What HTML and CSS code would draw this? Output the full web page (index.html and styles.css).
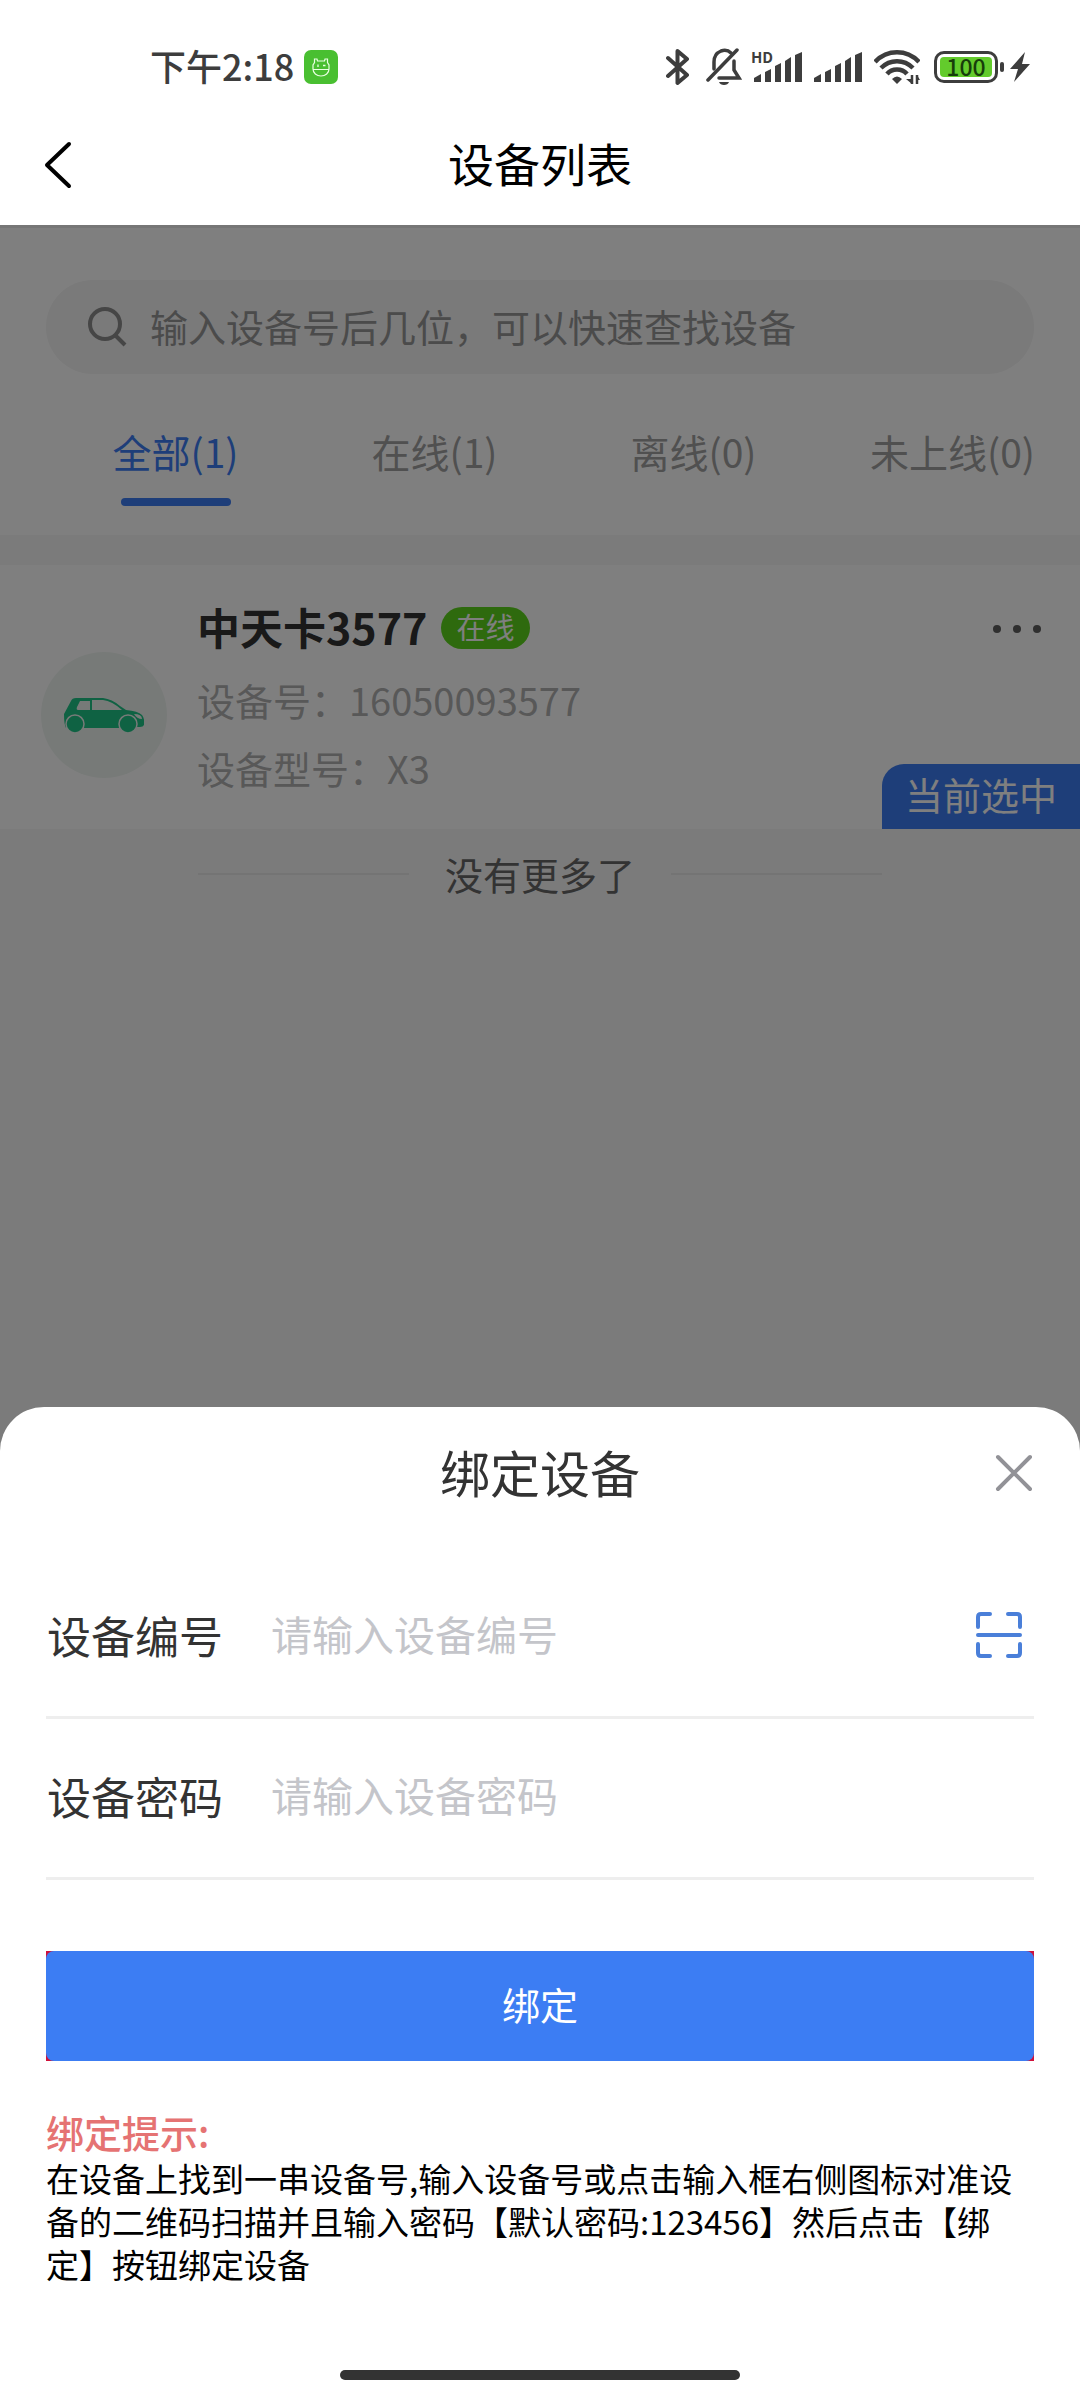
FILE: index.html
```html
<!DOCTYPE html>
<html lang="zh-CN">
<head>
    <meta charset="UTF-8">
    <meta name="viewport" content="width=device-width, initial-scale=1.0">
    <title>设备列表</title>
    <link rel="stylesheet" href="styles.css">
</head>
<body>
    <div class="status-bar">
        <div class="status-left">
            <span class="time">下午2:18</span>
            <svg class="app-icon" width="34" height="34" viewBox="0 0 34 34">
                <rect width="34" height="34" rx="7" fill="#49bf31"/>
                <path d="M9 19 V15 L10.500 12.500 V9 H13 L13.500 11 H20.500 L21 9 H23.500 V12.500 L25 15 V19 C25 23 21.500 26 17 26 S9 23 9 19 Z M9 19.500 H25" fill="none" stroke="#e9ffe2" stroke-width="1.2"/>
                <path d="M14 14.500 V17 M19 15.500 H21.500" stroke="#e9ffe2" stroke-width="1.3"/>
            </svg>
        </div>
        <div class="status-right">
            <svg width="24" height="38" viewBox="0 0 24 38" fill="none" stroke="#3d3d3d" stroke-width="4" stroke-linejoin="round" stroke-linecap="round">
                <path d="M2 10 L21 27 L11.500 35 V3 L21 11 L2 28"/>
            </svg>
            <svg class="bell" width="36" height="38" viewBox="0 0 36 38" fill="none" stroke="#3d3d3d" stroke-width="3.5" stroke-linecap="round">
                <path d="M25 5 C22 2 18 2 15 3 C10 5 8 9 8 14 V21 M28 13 V22 L33 30 H13"/>
                <path d="M2 32 L31 2"/>
                <path d="M13 34 H23 C22 38 14 38 13 34 Z" fill="#3d3d3d" stroke="none"/>
            </svg>
            <div class="signal-hd">
                <span class="hd">HD</span>
                <svg width="48" height="30" viewBox="0 0 48 30" fill="#3d3d3d">
                    <path d="M0 30 V26 L7 22 V30 Z M11 30 V20 L17 17 V30 Z M21 30 V14 L27 11 V30 Z M31 30 V9 L37 5 V30 Z M41 30 V3 L48 0 V30 Z"/>
                </svg>
            </div>
            <svg width="48" height="30" viewBox="0 0 48 30" fill="#3d3d3d">
                <path d="M0 30 V26 L7 22 V30 Z M11 30 V20 L17 17 V30 Z M21 30 V14 L27 11 V30 Z M31 30 V9 L37 5 V30 Z M41 30 V3 L48 0 V30 Z"/>
            </svg>
            <svg width="46" height="36" viewBox="0 0 46 36" fill="none" stroke="#3d3d3d" stroke-width="4.5">
                <path d="M1 13 C13 0 33 0 45 13 M7 19 C16 10 30 10 39 19 M13 25 C18 19 28 19 33 25"/>
                <path d="M18 30 Q23 25 28 30 L23 35 Z" fill="#3d3d3d" stroke="none"/>
                <path d="M38 26 V35 M43 35 V26" stroke-width="2.5"/>
                <path d="M32 30 H38 V35 Z M43 26 V31 H46 Z" fill="#3d3d3d" stroke="none"/>
            </svg>
            <div class="battery">
                <span class="battery-level">100</span>
            </div>
            <svg width="20" height="30" viewBox="0 0 20 30" fill="#3d3d3d">
                <path d="M15 0 L0 17 H8 L4 30 L20 12 H12 Z"/>
            </svg>
        </div>
    </div>

    <div class="navbar">
        <a href="#" class="back" aria-label="返回">
            <svg width="30" height="50" viewBox="0 0 30 50" fill="none" stroke="#000" stroke-width="4" stroke-linecap="round" stroke-linejoin="round">
                <path d="M26 4 L4 25 L26 46"/>
            </svg>
        </a>
        <h1>设备列表</h1>
    </div>

    <div class="page">
        <div class="top-panel">
            <div class="search">
                <svg width="42" height="42" viewBox="0 0 42 42" fill="none" stroke="#8c8c8c" stroke-width="4">
                    <circle cx="19" cy="18" r="15"/>
                    <path d="M29 29 L39 39"/>
                </svg>
                <input type="text" id="keyword" aria-label="查找设备" placeholder="输入设备号后几位，可以快速查找设备">
            </div>
            <div class="tabs">
                <button class="tab active">全部(1)</button>
                <button class="tab">在线(1)</button>
                <button class="tab">离线(0)</button>
                <button class="tab">未上线(0)</button>
            </div>
        </div>

        <div class="device">
            <div class="avatar">
                <svg width="80" height="35" viewBox="0 0 80 35">
                    <path d="M0 16 L7 3 Q8 0 12 0 H39 Q48 1 56 8 L62 12 Q74 13 78 17 Q81 21 80 27 Q79 29 76 29 H73 L64 30 H2 Q0 26 0 16 Z" fill="#1fc487"/>
                    <path d="M16 3 H26 V12 H14 Q12 12 13 9 Z M28 2 H39 Q48 3 58 12 H28 Z M70 16 Q78 16 78 21 Q73 21 70 16 Z" fill="#eff5f1"/>
                    <circle cx="11" cy="26" r="9" fill="#1fc487" stroke="#eff5f1" stroke-width="1.5"/>
                    <circle cx="64" cy="26" r="9" fill="#1fc487" stroke="#eff5f1" stroke-width="1.5"/>
                </svg>
            </div>
            <div class="info">
                <div class="name-row">
                    <h2>中天卡3577</h2>
                    <span class="badge">在线</span>
                </div>
                <p>设备号：16050093577</p>
                <p>设备型号：X3</p>
            </div>
            <button class="more" aria-label="更多">
                <svg width="50" height="10" viewBox="0 0 50 10" fill="#5e5e5e">
                    <circle cx="5" cy="5" r="4"/>
                    <circle cx="25" cy="5" r="4"/>
                    <circle cx="45" cy="5" r="4"/>
                </svg>
            </button>
            <span class="current">当前选中</span>
        </div>
        <div class="no-more">没有更多了</div>

        <!-- 绑定设备弹窗 -->
        <div class="mask">
            <div class="sheet">
                <div class="sheet-header">
                    <h2>绑定设备</h2>
                    <button class="close" aria-label="关闭">
                        <svg width="40" height="40" viewBox="0 0 40 40" stroke="#929297" stroke-width="4" stroke-linecap="round">
                            <path d="M4 4 L36 36 M36 4 L4 36"/>
                        </svg>
                    </button>
                </div>
                <div class="field">
                    <label for="deviceNo">设备编号</label>
                    <input type="text" id="deviceNo" placeholder="请输入设备编号">
                    <button class="scan" aria-label="扫码">
                        <svg width="46" height="46" viewBox="0 0 46 46" fill="none" stroke="#4a7fd9" stroke-width="4" stroke-linecap="round" stroke-linejoin="round">
                            <path d="M2 15 V5 Q2 2 5 2 H14 M32 2 H41 Q44 2 44 5 V15 M2 32 V41 Q2 44 5 44 H14 M32 44 H41 Q44 44 44 41 V32 M2 23 H44"/>
                        </svg>
                    </button>
                </div>
                <div class="field">
                    <label for="devicePwd">设备密码</label>
                    <input type="password" id="devicePwd" placeholder="请输入设备密码">
                </div>
                <div class="submit-wrap">
                    <button class="submit">绑定</button>
                </div>
                <h3>绑定提示:</h3>
                <p class="tips">在设备上找到一串设备号,输入设备号或点击输入框右侧图标对准设备的二维码扫描并且输入密码【默认密码:123456】然后点击【绑定】按钮绑定设备</p>
                <div class="home-bar"></div>
            </div>
        </div>
    </div>
</body>
</html>
```

FILE: styles.css
```css
* {
    margin: 0;
    padding: 0;
    box-sizing: border-box;
}
body {
    font-family: "Noto Sans CJK SC", "Noto Sans", sans-serif;
    display: flex;
    flex-direction: column;
    min-height: 100vh;
    background-color: #fff;
}
svg {
    display: block;
    flex-shrink: 0;
}
button {
    font-family: inherit;
    border: none;
    background: none;
    cursor: pointer;
}
input {
    font-family: inherit;
    border: none;
    outline: none;
    background: none;
    flex: 1;
    min-width: 0;
}

/* 状态栏 */
.status-bar {
    display: flex;
    justify-content: space-between;
    align-items: center;
    height: 104px;
    padding: 30px 50px 0 150px;
}
.status-left {
    display: flex;
    align-items: center;
    gap: 10px;
}
.time {
    padding-bottom: 4px;
    font-size: 36px;
    font-weight: 500;
    line-height: 40px;
    color: #3d3d3d;
}
.status-right {
    display: flex;
    align-items: center;
    gap: 12px;
}
.bell {
    margin-left: 4px;
}
.signal-hd {
    position: relative;
}
.hd {
    position: absolute;
    top: -3px;
    left: -3px;
    font-size: 15px;
    font-weight: 700;
    line-height: 16px;
    color: #3d3d3d;
}
.battery {
    position: relative;
    width: 64px;
    height: 32px;
    padding: 3px;
    margin-left: 2px;
    border: 3px solid #3d3d3d;
    border-radius: 10px;
}
.battery::after {
    content: "";
    position: absolute;
    top: 8px;
    right: -9px;
    width: 4px;
    height: 10px;
    border-radius: 2px;
    background-color: #3d3d3d;
}
.battery-level {
    display: block;
    height: 20px;
    border-radius: 4px;
    background-color: #63cb2c;
    color: #173d0b;
    font-size: 23px;
    font-weight: 500;
    line-height: 18px;
    text-align: center;
}

/* 导航栏 */
.navbar {
    display: flex;
    align-items: center;
    height: 121px;
    padding: 0 43px;
}
.navbar h1 {
    flex: 1;
    margin-right: 30px;
    padding-bottom: 6px;
    font-size: 46px;
    font-weight: 400;
    line-height: 60px;
    text-align: center;
    color: #000;
}

.page {
    position: relative;
    flex: 1;
    background-color: #f6f6f6;
}
.top-panel {
    padding: 52px 46px 29px;
    border-top: 3px solid #ececec;
    background-color: #fff;
}
.search {
    display: flex;
    align-items: center;
    gap: 22px;
    height: 94px;
    padding: 0 40px;
    border-radius: 47px;
    background-color: #f4f4f4;
}
.search input {
    height: 60px;
    padding-bottom: 4px;
    font-size: 38px;
    color: #333;
}
.search input::placeholder {
    color: #969696;
}
.tabs {
    display: flex;
    margin-top: 46px;
    overflow: hidden;
}
.tab {
    flex: 0 0 259px;
    display: flex;
    flex-direction: column;
    align-items: center;
    gap: 16px;
    font-size: 39px;
    line-height: 62px;
    color: #a0a0a0;
}
.tab::after {
    content: "";
    width: 110px;
    height: 8px;
    border-radius: 4px;
}
.tab.active {
    color: #3c7cf2;
}
.tab.active::after {
    background-color: #3c7cf2;
}

/* 设备卡片 */
.device {
    position: relative;
    display: flex;
    align-items: flex-start;
    margin-top: 30px;
    height: 264px;
    padding: 29px 38px 0 41px;
    background-color: #fff;
}
.avatar {
    display: flex;
    align-items: center;
    justify-content: center;
    width: 126px;
    height: 126px;
    margin-top: 58px;
    border-radius: 50%;
    background-color: #eff5f1;
}
.info {
    flex: 1;
    padding-left: 30px;
}
.name-row {
    display: flex;
    align-items: center;
    gap: 14px;
    height: 68px;
    margin-bottom: 4px;
}
.name-row h2 {
    padding-bottom: 4px;
    font-size: 43px;
    font-weight: 600;
    line-height: 60px;
    color: #333;
}
.badge {
    height: 42px;
    padding: 0 15px;
    border-radius: 21px;
    background-color: #5cd41c;
    color: #fff;
    font-size: 29px;
    line-height: 39px;
}
.info p {
    font-size: 38px;
    line-height: 68px;
    color: #b0b0b0;
}
.more {
    padding: 30px 0;
}
.current {
    position: absolute;
    right: 0;
    bottom: 0;
    height: 65px;
    padding: 0 23px;
    border-top-left-radius: 22px;
    background-color: #3c7cf2;
    color: #fff;
    font-size: 38px;
    line-height: 60px;
}
.no-more {
    display: flex;
    align-items: center;
    justify-content: center;
    gap: 36px;
    padding: 15px 198px;
    font-size: 38px;
    line-height: 60px;
    color: #666;
}
.no-more::before,
.no-more::after {
    content: "";
    flex: 1;
    height: 2px;
    background-color: #e8e8e8;
}

/* 弹窗 */
.mask {
    position: absolute;
    top: 0;
    right: 0;
    bottom: 0;
    left: 0;
    display: flex;
    flex-direction: column;
    justify-content: flex-end;
    background-color: rgba(0, 0, 0, 0.5);
}
.sheet {
    padding: 0 46px 20px;
    border-radius: 44px 44px 0 0;
    background-color: #fff;
}
.sheet-header {
    display: flex;
    align-items: center;
    height: 131px;
    margin-bottom: 20px;
}
.sheet-header h2 {
    flex: 1;
    padding: 0 0 4px 40px;
    font-size: 50px;
    font-weight: 400;
    line-height: 70px;
    text-align: center;
    color: #333;
}
.field {
    display: flex;
    align-items: center;
    height: 161px;
    padding-bottom: 4px;
    border-bottom: 3px solid #eee;
}
.field label {
    width: 225px;
    padding-left: 1px;
    font-size: 44px;
    line-height: 60px;
    color: #333;
}
.field input {
    height: 64px;
    padding-bottom: 4px;
    font-size: 41px;
    color: #333;
}
.field input::placeholder {
    color: #c4c5ca;
}
.scan {
    margin-right: 12px;
}
.submit-wrap {
    margin-top: 71px;
    background-color: #d0103a;
}
.submit {
    display: block;
    width: 100%;
    height: 110px;
    padding-bottom: 5px;
    border-radius: 8px;
    background-color: #3c7df3;
    color: #fff;
    font-size: 38px;
}
.sheet h3 {
    margin-top: 46px;
    font-size: 38px;
    font-weight: 500;
    line-height: 50px;
    color: #e57373;
}
.tips {
    font-size: 33px;
    line-height: 43px;
    color: #000;
}
.home-bar {
    width: 400px;
    max-width: 60%;
    height: 10px;
    margin: 84px auto 0;
    border-radius: 5px;
    background-color: #333;
}
```
